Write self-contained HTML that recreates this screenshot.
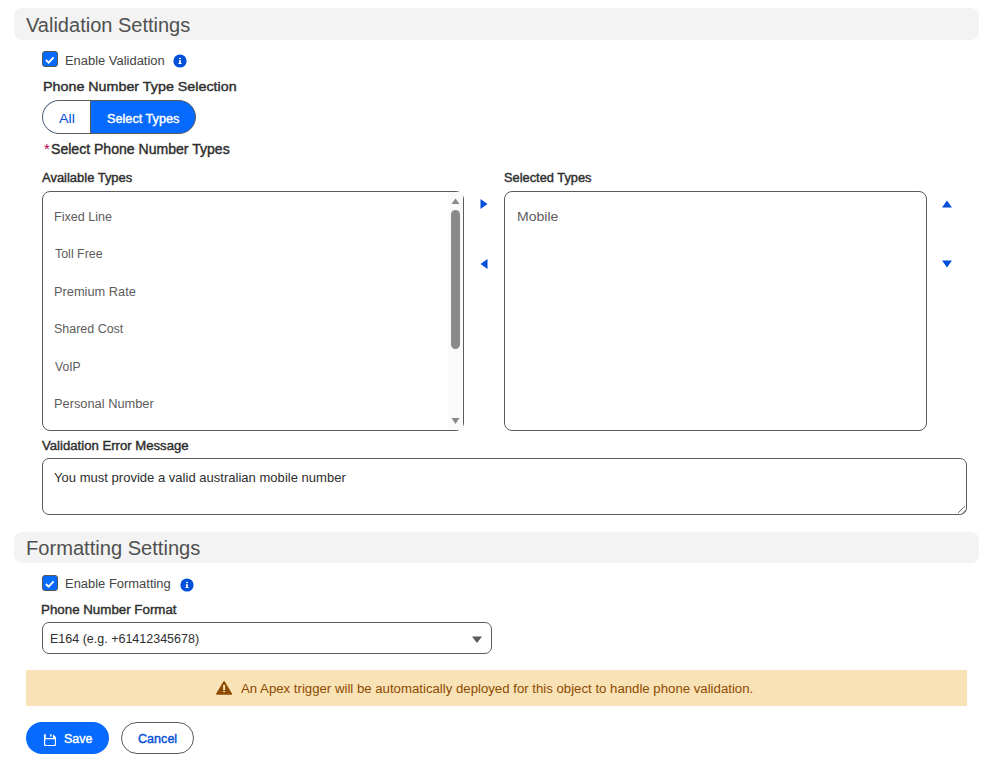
<!DOCTYPE html>
<html><head><meta charset="utf-8"><style>
html,body{margin:0;padding:0;background:#fff;width:987px;height:765px;overflow:hidden;}
body{position:relative;font-family:"Liberation Sans",sans-serif;}
.t{position:absolute;white-space:nowrap;line-height:normal;transform-origin:0 0;}
.r{position:absolute;}
</style></head><body>
<div class="r" style="left:14px;top:8px;width:965px;height:32px;background:#f3f3f3;border-radius:8px"></div>
<div class="t" style="left:26.40px;top:14.00px;font-size:20.35px;color:#505050;font-weight:400;transform:scaleX(0.9834);">Validation Settings</div>
<div class="r" style="left:42px;top:51px;width:15.5px;height:15.5px;box-sizing:border-box;background:#066afe;border:1px solid #555;border-radius:3px"></div>
<svg class="r" style="left:42px;top:51px" width="16" height="16" viewBox="0 0 16 16"><path d="M3.9 9 L6.6 11.6 L11.6 6.4" fill="none" stroke="#fff" stroke-width="1.9" stroke-linecap="butt" stroke-linejoin="miter"/></svg>
<div class="t" style="left:64.93px;top:53.00px;font-size:13.08px;color:#444;font-weight:400;transform:scaleX(0.9886);">Enable Validation</div>
<svg class="r" style="left:173px;top:54px" width="14" height="14" viewBox="0 0 14 14"><circle cx="7" cy="7" r="6.6" fill="#0250d9"/><rect x="6" y="4" width="2" height="1.1" fill="#fff"/><path d="M5.8 6.3 H7.9 V9.1 H8.6 V10.1 H5.4 V9.1 H6.1 V7.1 H5.8 Z" fill="#fff"/></svg>
<div class="t" style="left:42.72px;top:79.00px;font-size:13.37px;color:#2e2e2e;font-weight:400;transform:scaleX(1.0698);-webkit-text-stroke:0.4px #2e2e2e;">Phone Number Type Selection</div>
<div class="r" style="left:42px;top:100px;width:154px;height:33.5px;box-sizing:border-box;border:1px solid #5c5c5c;border-radius:17px;background:#066afe;overflow:hidden"><div style="position:absolute;left:0;top:0;width:46.5px;height:100%;background:#fff;border-right:1px solid #5c5c5c"></div></div>
<div class="t" style="left:58.96px;top:111.00px;font-size:13.08px;color:#0250d9;font-weight:400;transform:scaleX(1.0999);">All</div>
<div class="t" style="left:107.33px;top:111.00px;font-size:13.08px;color:#fff;font-weight:400;transform:scaleX(0.9699);-webkit-text-stroke:0.4px #fff;">Select Types</div>
<div class="t" style="left:43.54px;top:140.86px;font-size:14.29px;color:#b60554;font-weight:400;transform:scaleX(1.0451)">*</div>
<div class="t" style="left:51.37px;top:141.00px;font-size:13.95px;color:#2e2e2e;font-weight:400;transform:scaleX(1.0087);-webkit-text-stroke:0.4px #2e2e2e;">Select Phone Number Types</div>
<div class="t" style="left:41.97px;top:171.00px;font-size:12.65px;color:#2e2e2e;font-weight:400;transform:scaleX(1.0247);-webkit-text-stroke:0.4px #2e2e2e;">Available Types</div>
<div class="t" style="left:503.72px;top:171.00px;font-size:12.65px;color:#2e2e2e;font-weight:400;transform:scaleX(1.0149);-webkit-text-stroke:0.4px #2e2e2e;">Selected Types</div>
<div class="r" style="left:42px;top:191px;width:422px;height:240px;box-sizing:border-box;border:1px solid #5c5c5c;border-radius:8px;background:#fff"></div>
<div class="r" style="left:448px;top:192px;width:15px;height:238px;background:#fafafa"></div>
<div class="r" style="left:451px;top:210px;width:9px;height:139px;background:#8a8a8a;border-radius:4.5px"></div>
<svg class="r" style="left:448px;top:194px" width="15" height="12"><path d="M3.5 10 L7.5 4.5 L11.5 10 Z" fill="#8a8a8a"/></svg>
<svg class="r" style="left:448px;top:416px" width="15" height="12"><path d="M3.5 2 L7.5 8 L11.5 2 Z" fill="#8a8a8a"/></svg>
<div class="t" style="left:53.96px;top:209.00px;font-size:13.08px;color:#5c5c5c;font-weight:400;transform:scaleX(0.9608);">Fixed Line</div>
<div class="t" style="left:54.72px;top:246.00px;font-size:13.08px;color:#5c5c5c;font-weight:400;transform:scaleX(0.9496);">Toll Free</div>
<div class="t" style="left:53.94px;top:284.00px;font-size:13.08px;color:#5c5c5c;font-weight:400;transform:scaleX(0.9798);">Premium Rate</div>
<div class="t" style="left:54.44px;top:321.00px;font-size:13.08px;color:#5c5c5c;font-weight:400;transform:scaleX(0.9526);">Shared Cost</div>
<div class="t" style="left:54.94px;top:359.00px;font-size:13.08px;color:#5c5c5c;font-weight:400;transform:scaleX(0.9300);">VoIP</div>
<div class="t" style="left:53.94px;top:396.00px;font-size:13.08px;color:#5c5c5c;font-weight:400;transform:scaleX(0.9801);">Personal Number</div>
<svg class="r" style="left:478px;top:198px" width="12" height="12"><path d="M2.5 1 L9.5 6 L2.5 11 Z" fill="#0250d9"/></svg>
<svg class="r" style="left:478px;top:258px" width="12" height="12"><path d="M9.5 1 L2.5 6 L9.5 11 Z" fill="#0250d9"/></svg>
<div class="r" style="left:504px;top:191px;width:423px;height:240px;box-sizing:border-box;border:1px solid #5c5c5c;border-radius:8px;background:#fff"></div>
<div class="t" style="left:516.54px;top:209.00px;font-size:13.08px;color:#5c5c5c;font-weight:400;transform:scaleX(1.0735);">Mobile</div>
<svg class="r" style="left:941px;top:198px" width="12" height="12"><path d="M1 9.5 L6 2.5 L11 9.5 Z" fill="#0250d9"/></svg>
<svg class="r" style="left:941px;top:258px" width="12" height="12"><path d="M1 2.5 L6 9.5 L11 2.5 Z" fill="#0250d9"/></svg>
<div class="t" style="left:41.93px;top:439.00px;font-size:12.65px;color:#2e2e2e;font-weight:400;transform:scaleX(1.0397);-webkit-text-stroke:0.4px #2e2e2e;">Validation Error Message</div>
<div class="r" style="left:42px;top:458px;width:925px;height:57px;box-sizing:border-box;border:1px solid #5c5c5c;border-radius:7px;background:#fff"></div>
<div class="t" style="left:54.41px;top:470.00px;font-size:12.94px;color:#2e2e2e;font-weight:400;transform:scaleX(1.0085);">You must provide a valid australian mobile number</div>
<svg class="r" style="left:955px;top:503px" width="12" height="12"><path d="M3 9.8 L9.9 3.3 M7.2 10.6 L10.7 7.1" stroke="#666" stroke-width="1"/></svg>
<div class="r" style="left:14px;top:532px;width:965px;height:31px;background:#f3f3f3;border-radius:8px"></div>
<div class="t" style="left:26.34px;top:537.00px;font-size:20.35px;color:#505050;font-weight:400;transform:scaleX(0.9883);">Formatting Settings</div>
<div class="r" style="left:42px;top:575px;width:15.5px;height:15.5px;box-sizing:border-box;background:#066afe;border:1px solid #555;border-radius:3px"></div>
<svg class="r" style="left:42px;top:575px" width="16" height="16" viewBox="0 0 16 16"><path d="M3.9 9 L6.6 11.6 L11.6 6.4" fill="none" stroke="#fff" stroke-width="1.9" stroke-linecap="butt" stroke-linejoin="miter"/></svg>
<div class="t" style="left:65.03px;top:576.00px;font-size:13.08px;color:#444;font-weight:400;transform:scaleX(0.9897);">Enable Formatting</div>
<svg class="r" style="left:180px;top:578px" width="14" height="14" viewBox="0 0 14 14"><circle cx="7" cy="7" r="6.6" fill="#0250d9"/><rect x="6" y="4" width="2" height="1.1" fill="#fff"/><path d="M5.8 6.3 H7.9 V9.1 H8.6 V10.1 H5.4 V9.1 H6.1 V7.1 H5.8 Z" fill="#fff"/></svg>
<div class="t" style="left:41.30px;top:602.00px;font-size:13.08px;color:#2e2e2e;font-weight:400;transform:scaleX(1.0192);-webkit-text-stroke:0.4px #2e2e2e;">Phone Number Format</div>
<div class="r" style="left:42px;top:622px;width:450px;height:31.5px;box-sizing:border-box;border:1px solid #5c5c5c;border-radius:7px;background:#fff"></div>
<div class="t" style="left:50.27px;top:631.00px;font-size:13.08px;color:#2e2e2e;font-weight:400;transform:scaleX(0.9555);">E164 (e.g. +61412345678)</div>
<svg class="r" style="left:470px;top:634px" width="14" height="12"><path d="M2 2.5 L12 2.5 L7 9 Z" fill="#5c5c5c"/></svg>
<div class="r" style="left:26px;top:670px;width:941px;height:36px;background:#f9e2b5"></div>
<svg class="r" style="left:215px;top:680px" width="18" height="16" viewBox="0 0 18 16"><path d="M9.1 1.9 L16.3 14 L1.9 14 Z" fill="#8c4b02" stroke="#8c4b02" stroke-width="1.6" stroke-linejoin="round"/><rect x="8.1" y="4.9" width="2" height="5.2" fill="#f9e2b5"/><rect x="8.1" y="11" width="2" height="1.1" fill="#f9e2b5"/></svg>
<div class="t" style="left:240.87px;top:681.00px;font-size:13.08px;color:#8c4b02;font-weight:400;transform:scaleX(1.0093);">An Apex trigger will be automatically deployed for this object to handle phone validation.</div>
<div class="r" style="left:26px;top:722px;width:83px;height:32px;background:#066afe;border-radius:16px"></div>
<svg class="r" style="left:43px;top:733px" width="14" height="14" viewBox="0 0 14 14"><path d="M1 1.2 H10 L13 4.2 V12 Q13 13 12 13 H2 Q1 13 1 12 Z" fill="#fff"/><rect x="2.2" y="6.2" width="9.7" height="5.7" rx="0.8" fill="#066afe"/><rect x="2.8" y="0" width="7.2" height="5" fill="#066afe"/><rect x="7.1" y="1.2" width="1.5" height="2.4" fill="#fff"/></svg>
<div class="t" style="left:64.34px;top:731.00px;font-size:13.08px;color:#fff;font-weight:400;transform:scaleX(0.9494);-webkit-text-stroke:0.4px #fff;">Save</div>
<div class="r" style="left:121px;top:722px;width:73px;height:32px;box-sizing:border-box;border:1px solid #5c5c5c;border-radius:16px;background:#fff"></div>
<div class="t" style="left:138.07px;top:731.00px;font-size:13.08px;color:#0250d9;font-weight:400;transform:scaleX(0.9622);-webkit-text-stroke:0.4px #0250d9;">Cancel</div>
</body></html>
